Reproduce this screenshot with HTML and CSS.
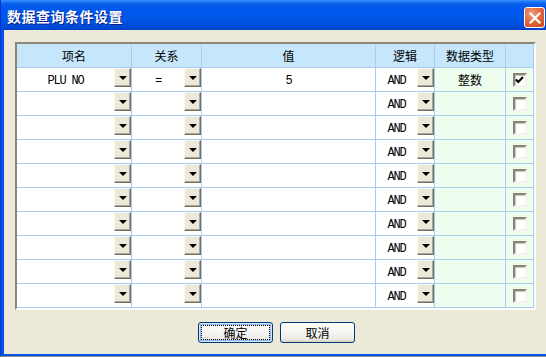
FILE: index.html
```html
<!DOCTYPE html>
<html>
<head>
<meta charset="utf-8">
<link rel="stylesheet" href="styles.css">
</head>
<body>
<div class="window">
  <div class="titlebar">
    <span class="title">数据查询条件设置</span>
    <span class="close"><svg width="12" height="12" viewBox="0 0 12 12"><path d="M1.5 1.5 L10.5 10.5 M10.5 1.5 L1.5 10.5" stroke="#fff" stroke-width="2.2" stroke-linecap="square"/></svg></span>
  </div>
  <div class="client">
    <div class="frame">
      <div class="grid">
        <div class="hd">项名</div><div class="hd">关系</div><div class="hd">值</div><div class="hd">逻辑</div><div class="hd">数据类型</div><div class="hd"></div>

        <div class="c"><span class="v">PLU NO</span><span class="dd"><i class="tri"></i></span></div>
        <div class="c"><span class="v">=</span><span class="dd"><i class="tri"></i></span></div>
        <div class="c"><span class="v">5</span></div>
        <div class="c"><span class="v">AND</span><span class="dd"><i class="tri"></i></span></div>
        <div class="c g"><span class="v cn">整数</span></div>
        <div class="c g ck"><span class="cb"><svg width="9" height="8" viewBox="0 0 9 8"><polyline points="1,3.5 3.3,6 8,1" fill="none" stroke="#000" stroke-width="2"/></svg></span></div>

        <div class="c"><span class="v"></span><span class="dd"><i class="tri"></i></span></div>
        <div class="c"><span class="v"></span><span class="dd"><i class="tri"></i></span></div>
        <div class="c"><span class="v"></span></div>
        <div class="c"><span class="v">AND</span><span class="dd"><i class="tri"></i></span></div>
        <div class="c g"><span class="v"></span></div>
        <div class="c g ck"><span class="cb"></span></div>

        <div class="c"><span class="v"></span><span class="dd"><i class="tri"></i></span></div>
        <div class="c"><span class="v"></span><span class="dd"><i class="tri"></i></span></div>
        <div class="c"><span class="v"></span></div>
        <div class="c"><span class="v">AND</span><span class="dd"><i class="tri"></i></span></div>
        <div class="c g"><span class="v"></span></div>
        <div class="c g ck"><span class="cb"></span></div>

        <div class="c"><span class="v"></span><span class="dd"><i class="tri"></i></span></div>
        <div class="c"><span class="v"></span><span class="dd"><i class="tri"></i></span></div>
        <div class="c"><span class="v"></span></div>
        <div class="c"><span class="v">AND</span><span class="dd"><i class="tri"></i></span></div>
        <div class="c g"><span class="v"></span></div>
        <div class="c g ck"><span class="cb"></span></div>

        <div class="c"><span class="v"></span><span class="dd"><i class="tri"></i></span></div>
        <div class="c"><span class="v"></span><span class="dd"><i class="tri"></i></span></div>
        <div class="c"><span class="v"></span></div>
        <div class="c"><span class="v">AND</span><span class="dd"><i class="tri"></i></span></div>
        <div class="c g"><span class="v"></span></div>
        <div class="c g ck"><span class="cb"></span></div>

        <div class="c"><span class="v"></span><span class="dd"><i class="tri"></i></span></div>
        <div class="c"><span class="v"></span><span class="dd"><i class="tri"></i></span></div>
        <div class="c"><span class="v"></span></div>
        <div class="c"><span class="v">AND</span><span class="dd"><i class="tri"></i></span></div>
        <div class="c g"><span class="v"></span></div>
        <div class="c g ck"><span class="cb"></span></div>

        <div class="c"><span class="v"></span><span class="dd"><i class="tri"></i></span></div>
        <div class="c"><span class="v"></span><span class="dd"><i class="tri"></i></span></div>
        <div class="c"><span class="v"></span></div>
        <div class="c"><span class="v">AND</span><span class="dd"><i class="tri"></i></span></div>
        <div class="c g"><span class="v"></span></div>
        <div class="c g ck"><span class="cb"></span></div>

        <div class="c"><span class="v"></span><span class="dd"><i class="tri"></i></span></div>
        <div class="c"><span class="v"></span><span class="dd"><i class="tri"></i></span></div>
        <div class="c"><span class="v"></span></div>
        <div class="c"><span class="v">AND</span><span class="dd"><i class="tri"></i></span></div>
        <div class="c g"><span class="v"></span></div>
        <div class="c g ck"><span class="cb"></span></div>

        <div class="c"><span class="v"></span><span class="dd"><i class="tri"></i></span></div>
        <div class="c"><span class="v"></span><span class="dd"><i class="tri"></i></span></div>
        <div class="c"><span class="v"></span></div>
        <div class="c"><span class="v">AND</span><span class="dd"><i class="tri"></i></span></div>
        <div class="c g"><span class="v"></span></div>
        <div class="c g ck"><span class="cb"></span></div>

        <div class="c"><span class="v"></span><span class="dd"><i class="tri"></i></span></div>
        <div class="c"><span class="v"></span><span class="dd"><i class="tri"></i></span></div>
        <div class="c"><span class="v"></span></div>
        <div class="c"><span class="v">AND</span><span class="dd"><i class="tri"></i></span></div>
        <div class="c g"><span class="v"></span></div>
        <div class="c g ck"><span class="cb"></span></div>
      </div>
    </div>
    <div class="buttons">
      <button class="btn focus">确定</button>
      <button class="btn">取消</button>
    </div>
  </div>
</div>
</body>
</html>
```

FILE: styles.css
```css
html, body {
  margin: 0;
  padding: 0;
}
body {
  width: 546px;
  height: 357px;
  overflow: hidden;
  background: #8c8c8c;
  font-family: "Noto Sans CJK SC", "Liberation Sans", sans-serif;
}
.window {
  width: 560px;
  height: 356px;
  background: #0054e3;
  box-sizing: border-box;
  border-left: 1px solid #0831d9;
}
.titlebar {
  height: 30px;
  display: flex;
  align-items: center;
  padding-left: 6px;
  background: linear-gradient(to bottom, #3d95ff 0, #1a74f5 2px, #0a5fe8 4px, #0058ee 9px, #0055e5 20px, #004ad6 27px, #0041c5 30px);
  position: relative;
}
.title {
  color: #fff;
  font-size: 14px;
  font-weight: bold;
  letter-spacing: 0.5px;
  text-shadow: 1px 1px 0 #0a1e8c;
  line-height: 16px;
  margin-top: 1px;
}
.close {
  position: absolute;
  left: 523px;
  top: 7px;
  width: 19px;
  height: 19px;
  border: 1px solid #fff;
  border-radius: 3px;
  background: radial-gradient(circle at 35% 30%, #f0a080 0, #e36a3f 45%, #cc4418 100%);
  display: flex;
  align-items: center;
  justify-content: center;
}
.client {
  margin-left: 3px;
  height: 324px;
  background: #ece9d8;
  padding: 12px 0 0 11px;
  box-sizing: border-box;
}
.frame {
  width: 521px;
  box-sizing: border-box;
  border: 2px solid;
  border-color: #8a877a #fdfdfb #fdfdfb #8a877a;
  background: #fff;
}
.grid {
  display: grid;
  grid-template-columns: 115px 70px 174px 59px 71px 28px;
  grid-auto-rows: 24px;
}
.grid > div {
  box-sizing: border-box;
  border-right: 1px solid #a9cdf2;
  border-bottom: 1px solid #a9cdf2;
}
.hd {
  background: #c5e6fb;
  font-size: 12px;
  line-height: 23px;
  text-align: center;
  color: #000;
}
.c {
  display: flex;
  align-items: flex-start;
  background: #fff;
}
.c.g {
  background: #effdef;
}
.v {
  flex: 1;
  align-self: center;
  text-align: center;
  font-family: "Liberation Mono", monospace;
  font-size: 12px;
  letter-spacing: -1.2px;
  line-height: 14px;
  margin-top: 2px;
  color: #000;
}
.v.cn {
  font-family: "Noto Sans CJK SC", sans-serif;
  font-size: 12px;
  letter-spacing: 0;
  margin-top: 0;
}
.dd {
  width: 15px;
  height: 17px;
  background: #ece9d8;
  border: 1px solid;
  border-color: #f8f7f2 #716f64 #716f64 #f8f7f2;
  box-shadow: inset -1px -1px 0 #aca899;
  display: flex;
  align-items: center;
  justify-content: center;
}
.tri {
  display: block;
  width: 0;
  height: 0;
  margin-top: 1px;
  border-left: 4px solid transparent;
  border-right: 4px solid transparent;
  border-top: 4px solid #000;
}
.ck {
  justify-content: center;
  align-items: center;
}
.cb {
  width: 10px;
  height: 10px;
  background: #fff;
  border: 2px solid;
  border-color: #868478 #f4f3ee #f4f3ee #868478;
  box-shadow: inset 1px 1px 0 #c8c5b8;
  display: flex;
  align-items: center;
  justify-content: center;
}
.buttons {
  display: flex;
  gap: 7px;
  margin-top: 12px;
  padding-left: 183px;
}
.btn {
  width: 75px;
  height: 21px;
  padding: 0;
  font-family: "Noto Sans CJK SC", sans-serif;
  font-size: 12px;
  line-height: 17px;
  color: #000;
  border: 1px solid #003c74;
  border-radius: 3px;
  background: linear-gradient(to bottom, #ffffff 0, #f7f7f4 40%, #ecebe6 85%, #d6d0c5 100%);
}
.btn.focus {
  box-shadow: inset 0 0 0 1px #cee7ff, inset 0 0 0 2px #98b8ea;
  outline: 1px dotted #000;
  outline-offset: -4px;
}
```
